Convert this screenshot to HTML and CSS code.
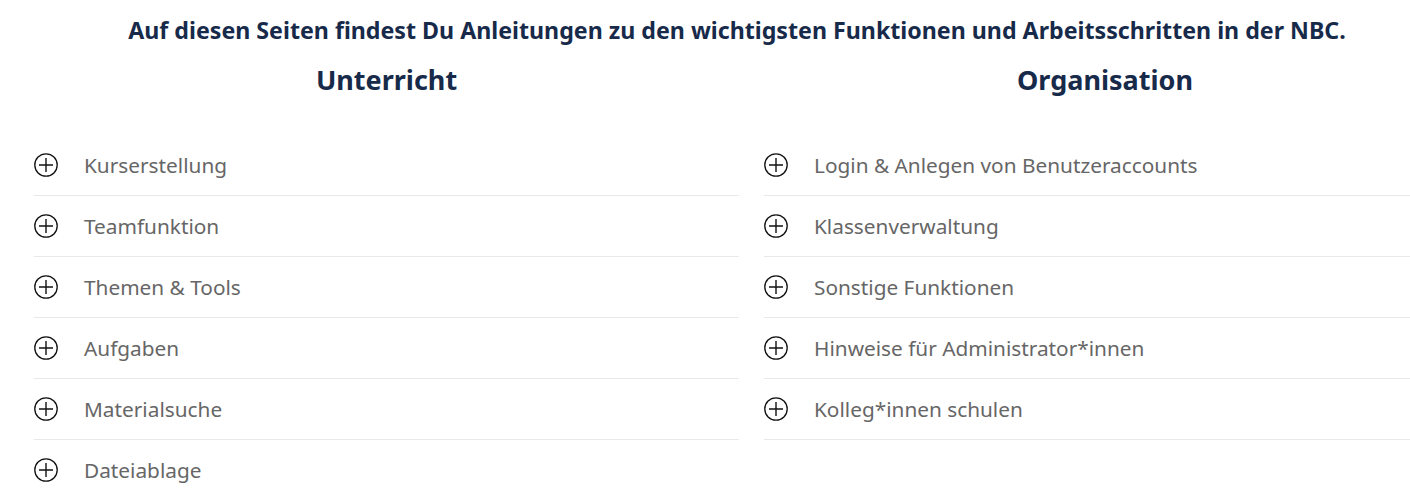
FILE: index.html
```html
<!DOCTYPE html>
<html lang="de">
<head>
<meta charset="utf-8">
<link rel="stylesheet" href="styles.css">
</head>
<body>
<div class="page">
  <h1 class="intro">Auf diesen Seiten findest Du Anleitungen zu den wichtigsten Funktionen und Arbeitsschritten in der NBC.</h1>
  <div class="columns">
    <section class="col col-left">
      <h2 class="col-title">Unterricht</h2>
      <ul class="list">
        <li class="item"><span class="icon"><svg viewBox="0 0 24 24" width="24" height="24"><circle cx="12" cy="12" r="11.2" fill="none" stroke="#111" stroke-width="1.3"/><path d="M5 12h14M12 5v14" stroke="#111" stroke-width="1.4"/></svg></span><span class="label">Kurserstellung</span></li>
        <li class="item"><span class="icon"><svg viewBox="0 0 24 24" width="24" height="24"><circle cx="12" cy="12" r="11.2" fill="none" stroke="#111" stroke-width="1.3"/><path d="M5 12h14M12 5v14" stroke="#111" stroke-width="1.4"/></svg></span><span class="label">Teamfunktion</span></li>
        <li class="item"><span class="icon"><svg viewBox="0 0 24 24" width="24" height="24"><circle cx="12" cy="12" r="11.2" fill="none" stroke="#111" stroke-width="1.3"/><path d="M5 12h14M12 5v14" stroke="#111" stroke-width="1.4"/></svg></span><span class="label">Themen &amp; Tools</span></li>
        <li class="item"><span class="icon"><svg viewBox="0 0 24 24" width="24" height="24"><circle cx="12" cy="12" r="11.2" fill="none" stroke="#111" stroke-width="1.3"/><path d="M5 12h14M12 5v14" stroke="#111" stroke-width="1.4"/></svg></span><span class="label">Aufgaben</span></li>
        <li class="item"><span class="icon"><svg viewBox="0 0 24 24" width="24" height="24"><circle cx="12" cy="12" r="11.2" fill="none" stroke="#111" stroke-width="1.3"/><path d="M5 12h14M12 5v14" stroke="#111" stroke-width="1.4"/></svg></span><span class="label">Materialsuche</span></li>
        <li class="item"><span class="icon"><svg viewBox="0 0 24 24" width="24" height="24"><circle cx="12" cy="12" r="11.2" fill="none" stroke="#111" stroke-width="1.3"/><path d="M5 12h14M12 5v14" stroke="#111" stroke-width="1.4"/></svg></span><span class="label">Dateiablage</span></li>
      </ul>
    </section>
    <section class="col col-right">
      <h2 class="col-title">Organisation</h2>
      <ul class="list">
        <li class="item"><span class="icon"><svg viewBox="0 0 24 24" width="24" height="24"><circle cx="12" cy="12" r="11.2" fill="none" stroke="#111" stroke-width="1.3"/><path d="M5 12h14M12 5v14" stroke="#111" stroke-width="1.4"/></svg></span><span class="label">Login &amp; Anlegen von Benutzeraccounts</span></li>
        <li class="item"><span class="icon"><svg viewBox="0 0 24 24" width="24" height="24"><circle cx="12" cy="12" r="11.2" fill="none" stroke="#111" stroke-width="1.3"/><path d="M5 12h14M12 5v14" stroke="#111" stroke-width="1.4"/></svg></span><span class="label">Klassenverwaltung</span></li>
        <li class="item"><span class="icon"><svg viewBox="0 0 24 24" width="24" height="24"><circle cx="12" cy="12" r="11.2" fill="none" stroke="#111" stroke-width="1.3"/><path d="M5 12h14M12 5v14" stroke="#111" stroke-width="1.4"/></svg></span><span class="label">Sonstige Funktionen</span></li>
        <li class="item"><span class="icon"><svg viewBox="0 0 24 24" width="24" height="24"><circle cx="12" cy="12" r="11.2" fill="none" stroke="#111" stroke-width="1.3"/><path d="M5 12h14M12 5v14" stroke="#111" stroke-width="1.4"/></svg></span><span class="label">Hinweise für Administrator*innen</span></li>
        <li class="item"><span class="icon"><svg viewBox="0 0 24 24" width="24" height="24"><circle cx="12" cy="12" r="11.2" fill="none" stroke="#111" stroke-width="1.3"/><path d="M5 12h14M12 5v14" stroke="#111" stroke-width="1.4"/></svg></span><span class="label">Kolleg*innen schulen</span></li>
      </ul>
    </section>
  </div>
</div>
</body>
</html>
```
FILE: styles.css
```css
html, body {
  margin: 0;
  padding: 0;
  background: #fff;
  overflow: hidden;
}
body {
  font-family: "Noto Sans", "Open Sans", sans-serif;
}
.page {
  width: 1412px;
  padding-left: 34px;
}
.intro {
  margin: 0 0 0 -6px;
  padding-top: 14px;
  font-size: 23.2px;
  font-weight: 700;
  line-height: 32px;
  color: #172a4a;
  text-align: center;
}
.columns {
  display: grid;
  grid-template-columns: 705px 682px;
  column-gap: 25px;
}
.col-title {
  margin: 0;
  padding-top: 15px;
  font-size: 27px;
  font-weight: 700;
  line-height: 38px;
  color: #172a4a;
  text-align: center;
}
.list {
  list-style: none;
  margin: 0;
  padding: 0;
  padding-top: 36px;
}
.item {
  display: flex;
  align-items: center;
  height: 60px;
  border-bottom: 1px solid #e8e8e8;
}
.col-left .item:last-child {
  border-bottom: none;
}
.icon {
  display: flex;
  width: 24px;
  height: 24px;
  margin-right: 26px;
}
.label {
  font-size: 20.8px;
  color: #666;
}
```
